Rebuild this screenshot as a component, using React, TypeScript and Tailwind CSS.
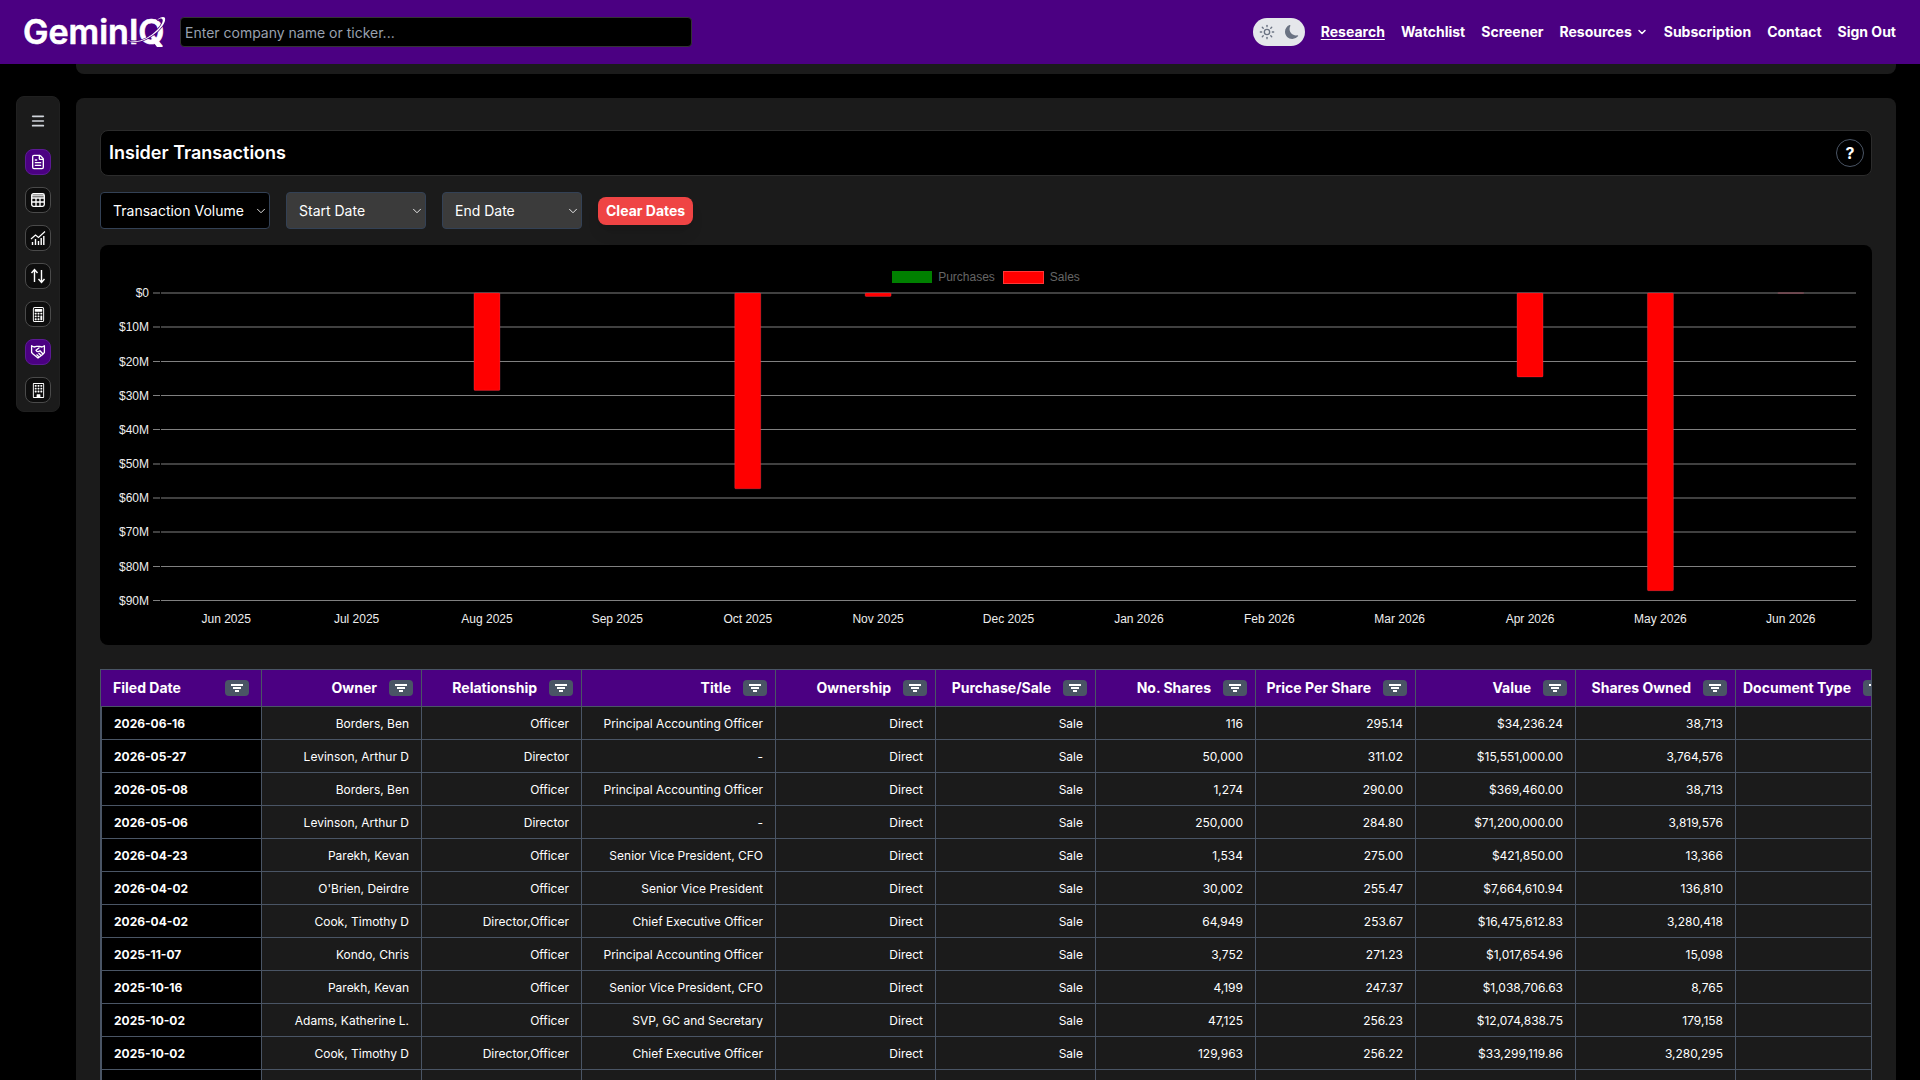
import React from "react"
import { ChevronDown, FileText, Menu, Sun } from "lucide-react"
import { BsBuilding, BsCalculator, BsMoonFill } from "react-icons/bs"

const navLinks = ["Watchlist", "Screener", "Resources", "Subscription", "Contact", "Sign Out"]

const months = [
  { label: "Jun 2025", sales: 0 },
  { label: "Jul 2025", sales: 0 },
  { label: "Aug 2025", sales: 28.5 },
  { label: "Sep 2025", sales: 0 },
  { label: "Oct 2025", sales: 57.3 },
  { label: "Nov 2025", sales: 1.02 },
  { label: "Dec 2025", sales: 0 },
  { label: "Jan 2026", sales: 0 },
  { label: "Feb 2026", sales: 0 },
  { label: "Mar 2026", sales: 0 },
  { label: "Apr 2026", sales: 24.56 },
  { label: "May 2026", sales: 87.12 },
  { label: "Jun 2026", sales: 0.03 },
]

const ticks = [
  { label: "$0", y: 0 },
  { label: "$10M", y: 34 },
  { label: "$20M", y: 68.5 },
  { label: "$30M", y: 102.5 },
  { label: "$40M", y: 136.5 },
  { label: "$50M", y: 171 },
  { label: "$60M", y: 205 },
  { label: "$70M", y: 239 },
  { label: "$80M", y: 273.5 },
  { label: "$90M", y: 307.5 },
]

const columns = [
  "Filed Date",
  "Owner",
  "Relationship",
  "Title",
  "Ownership",
  "Purchase/Sale",
  "No. Shares",
  "Price Per Share",
  "Value",
  "Shares Owned",
  "Document Type",
]

const rows = [
  ["2026-06-16", "Borders, Ben", "Officer", "Principal Accounting Officer", "Direct", "Sale", "116", "295.14", "$34,236.24", "38,713"],
  ["2026-05-27", "Levinson, Arthur D", "Director", "-", "Direct", "Sale", "50,000", "311.02", "$15,551,000.00", "3,764,576"],
  ["2026-05-08", "Borders, Ben", "Officer", "Principal Accounting Officer", "Direct", "Sale", "1,274", "290.00", "$369,460.00", "38,713"],
  ["2026-05-06", "Levinson, Arthur D", "Director", "-", "Direct", "Sale", "250,000", "284.80", "$71,200,000.00", "3,819,576"],
  ["2026-04-23", "Parekh, Kevan", "Officer", "Senior Vice President, CFO", "Direct", "Sale", "1,534", "275.00", "$421,850.00", "13,366"],
  ["2026-04-02", "O'Brien, Deirdre", "Officer", "Senior Vice President", "Direct", "Sale", "30,002", "255.47", "$7,664,610.94", "136,810"],
  ["2026-04-02", "Cook, Timothy D", "Director,Officer", "Chief Executive Officer", "Direct", "Sale", "64,949", "253.67", "$16,475,612.83", "3,280,418"],
  ["2025-11-07", "Kondo, Chris", "Officer", "Principal Accounting Officer", "Direct", "Sale", "3,752", "271.23", "$1,017,654.96", "15,098"],
  ["2025-10-16", "Parekh, Kevan", "Officer", "Senior Vice President, CFO", "Direct", "Sale", "4,199", "247.37", "$1,038,706.63", "8,765"],
  ["2025-10-02", "Adams, Katherine L.", "Officer", "SVP, GC and Secretary", "Direct", "Sale", "47,125", "256.23", "$12,074,838.75", "179,158"],
  ["2025-10-02", "Cook, Timothy D", "Director,Officer", "Chief Executive Officer", "Direct", "Sale", "129,963", "256.22", "$33,299,119.86", "3,280,295"],
  [],
]

const Logo = () => (
  <svg width="142" height="36" viewBox="0 0 142 36" role="img" className="shrink-0 overflow-visible" fill="white">
    <text x="-1" y="30" fontFamily="Inter, sans-serif" fontSize="34" fontWeight="600" stroke="white" strokeWidth="0.6">
      GeminIQ
    </text>
    <path
      d="M103 26c11 4 22-2 30-10 5-5 7-10 5-11-1-1-3 0-5 1 3-3 7-4 8-2 1 4-3 9-7 13-10 9-22 14-31 9z"
      stroke="#4b0082"
      strokeWidth="1.500"
      paintOrder="stroke"
    />
    <path d="M127 25l4-2 8 10h-6z" />
  </svg>
)

const TableIcon = () => (
  <svg width="16" height="16" viewBox="0 0 16 16" fill="none" stroke="currentColor">
    <rect x="1.700" y="1.700" width="12.600" height="12.600" rx="1.800" strokeWidth="1.300" />
    <path d="M2 3.500h12" strokeWidth="2.200" opacity="0.8" />
    <path d="M2 6h12M2 10h12M6 6v8M10 6v8" strokeWidth="1.300" />
  </svg>
)

const TrendIcon = () => (
  <svg width="16" height="16" viewBox="0 0 16 16" fill="none" stroke="currentColor">
    <path d="M1 9l4.500-4 3 2.500L15 1.500" strokeWidth="1.200" />
    <path d="M2.500 15v-3M5.500 15V9M8.500 15v-4M11.200 15V8M13.800 15V6" strokeWidth="1.400" />
  </svg>
)

const SwapIcon = () => (
  <svg width="16" height="16" viewBox="0 0 16 16" fill="none" stroke="currentColor" strokeWidth="1.400">
    <path d="M4.500 14V2M1.500 5l3-3.500 3 3.500M11.500 2v12M8.500 11l3 3.500 3-3.500" />
  </svg>
)

const HandshakeIcon = () => (
  <svg width="16" height="16" viewBox="0 0 16 16" fill="none" stroke="currentColor" strokeWidth="1.300" strokeLinejoin="round">
    <path d="M1.600 1.700L4 3l2.500-.7h3L12 3l2.400-1.300V8.500l-1.400 1.700L8 14 3 10 1.600 8.500z" />
    <path d="M9.500 3.500L6 6.200c.7 1.800 2.600 1.600 4 .6l3 3.200M8.500 9l2.500 2.500M6.500 10.500l2.300 2.300" />
  </svg>
)

const sidebarItems = [
  { label: "Filings", icon: <FileText size={16} />, active: true },
  { label: "Financials", icon: <TableIcon />, active: false },
  { label: "Charts", icon: <TrendIcon />, active: false },
  { label: "Compare", icon: <SwapIcon />, active: false },
  { label: "Valuation", icon: <BsCalculator size={15} />, active: false },
  { label: "Insiders", icon: <HandshakeIcon />, active: true },
  { label: "Institutions", icon: <BsBuilding size={15} />, active: false },
]

const Header = () => (
  <header className="flex h-16 shrink-0 items-center justify-between bg-[#4b0082] px-6">
    <div className="flex grow items-center gap-[14px]">
      <a href="#" aria-label="Home">
        <Logo />
      </a>
      <input
        type="text"
        aria-label="Company search"
        placeholder="Enter company name or ticker..."
        className="h-[30px] w-full max-w-[512px] rounded border border-[#333] bg-black px-1 text-sm text-white placeholder:text-gray-400"
      />
    </div>
    <nav className="flex items-center gap-4 text-sm font-bold">
      <button
        type="button"
        aria-label="Toggle theme"
        className="flex h-7 w-[52px] items-center justify-between rounded-full bg-gray-200 px-[6px] text-gray-500"
      >
        <Sun size={16} strokeWidth={2} />
        <BsMoonFill size={14} />
      </button>
      <a href="#" className="underline underline-offset-2">
        Research
      </a>
      {navLinks.map((link) => (
        <a key={link} href="#" className="flex items-center gap-1">
          {link}
          {link === "Resources" && <ChevronDown size={12} strokeWidth={3} />}
        </a>
      ))}
    </nav>
  </header>
)

const Sidebar = () => (
  <aside className="mt-8 flex w-11 shrink-0 flex-col items-center gap-3 self-start rounded-lg border border-[#202020] bg-[#1b1b1b] pt-[11px] pb-2">
    <button type="button" aria-label="Menu" className="mb-[3px] flex h-[26px] w-[26px] items-center justify-center text-gray-300">
      <Menu size={16} strokeWidth={2.5} />
    </button>
    {sidebarItems.map((item) => (
      <button
        key={item.label}
        type="button"
        aria-label={item.label}
        className={
          item.active
            ? "flex h-[26px] w-[26px] items-center justify-center rounded-lg border border-[#5c1a94] bg-[#4b0082]"
            : "flex h-[26px] w-[26px] items-center justify-center rounded-lg border border-[#4a4a4a] bg-[#0d0d0d]"
        }
      >
        {item.icon}
      </button>
    ))}
  </aside>
)

type PickerProps = {
  label: string
  className: string
}

const Picker: React.FC<PickerProps> = ({ label, className }) => (
  <div className="relative">
    <select
      aria-label={label}
      className={`h-[37px] appearance-none rounded border border-[#334155] pl-3 text-sm ${className}`}
    >
      <option>{label}</option>
    </select>
    <ChevronDown size={14} strokeWidth={1.5} className="pointer-events-none absolute top-3 right-[2px]" />
  </div>
)

const VolumeChart = () => (
  <div className="mt-4 h-[400px] rounded-lg bg-black p-4 font-['Liberation_Sans',sans-serif] text-xs">
    <div className="flex h-8 items-center justify-center gap-2 text-[#666]">
      <span className="flex items-center gap-[6px]">
        <span className="h-3 w-10 bg-[#008000]" />
        Purchases
      </span>
      <span className="flex items-center gap-[6px]">
        <span className="h-[13px] w-[41px] border border-[#ff3838] bg-[#ff0000]" />
        Sales
      </span>
    </div>
    <div className="pl-[45px]">
      <svg width="100%" height="336" className="block overflow-visible" fontSize="12">
        {ticks.map((tick) => (
          <g key={tick.label} stroke="#808080">
            <line x1="-8" x2="-1" y1={tick.y} y2={tick.y} />
            <line x1="0" x2="100%" y1={tick.y} y2={tick.y} />
            <text x="-12" y={tick.y + 4} textAnchor="end" fill="#eee" stroke="none">
              {tick.label}
            </text>
          </g>
        ))}
        {months.map((month, i) => {
          const center = `${((i + 0.5) * 100) / months.length}%`
          return (
            <React.Fragment key={month.label}>
              {month.sales > 0 && (
                <svg x={center} y="0" className="overflow-visible">
                  <rect
                    x="-13"
                    width="26"
                    height={month.sales * 3.417}
                    rx="1"
                    fill="#ff0000"
                    stroke="#ff6384"
                    strokeOpacity="0.25"
                  />
                </svg>
              )}
              <text x={center} y="330" textAnchor="middle" fill="#eee">
                {month.label}
              </text>
            </React.Fragment>
          )
        })}
      </svg>
    </div>
  </div>
)

const FilterButton: React.FC<{ column: string }> = ({ column }) => (
  <button
    type="button"
    aria-label={`Filter ${column}`}
    className="flex h-4 w-6 shrink-0 items-center justify-center rounded bg-gray-600"
  >
    <svg width="12" height="8" viewBox="0 0 12 8" fill="white">
      <path d="M0 0h12v2H0zM2 3h8v2H2zM4 6h4v2H4z" />
    </svg>
  </button>
)

const TransactionsTable = () => (
  <div className="mt-6 overflow-hidden border border-b-0 border-gray-600">
    <table className="w-[1794px] table-fixed border-separate border-spacing-0">
      <colgroup>
        {columns.map((column) => (
          <col key={column} className={column === "Title" ? "w-[194px]" : "w-[160px]"} />
        ))}
      </colgroup>
      <thead>
        <tr>
          {columns.map((column, i) => (
            <th
              key={column}
              className={
                i === 0
                  ? "h-[37px] border-b border-gray-600 bg-[#4b0082] px-3 text-sm font-bold"
                  : "h-[37px] border-b border-l border-gray-600 bg-[#4b0082] px-2 text-sm font-bold"
              }
            >
              <div className={i === 0 ? "flex items-center justify-between" : "flex items-center justify-end gap-3"}>
                <span className="whitespace-nowrap">{column}</span>
                <FilterButton column={column} />
              </div>
            </th>
          ))}
        </tr>
      </thead>
      <tbody>
        {rows.map((row, r) => (
          <tr key={r}>
            {columns.map((column, i) =>
              i === 0 ? (
                <td key={column} className="h-[33px] border-b border-l border-gray-600 bg-black px-3 pt-[2px] pb-0 text-xs font-bold">
                  {row[i]}
                </td>
              ) : (
                <td key={column} className="h-[33px] border-b border-l border-gray-600 px-3 pt-[2px] pb-0 text-right text-xs whitespace-nowrap">
                  {row[i]}
                </td>
              )
            )}
          </tr>
        ))}
      </tbody>
    </table>
  </div>
)

export default function App() {
  return (
    <div className="flex h-screen flex-col overflow-hidden bg-black font-['Inter',sans-serif] text-white">
      <Header />
      <div className="flex min-h-0 grow gap-4 pr-6 pl-4">
        <Sidebar />
        <main className="min-w-0 grow">
          <div className="h-[10px] rounded-b-lg bg-[#1b1b1b]" />
          <section className="mt-6 rounded-lg bg-[#1b1b1b] px-6 pt-8 pb-6">
            <div className="flex h-[46px] items-center justify-between rounded-lg border border-[#2c2c2c] bg-black pr-[7px] pl-2">
              <h1 className="text-lg font-semibold">Insider Transactions</h1>
              <button
                type="button"
                aria-label="Help"
                className="h-7 w-7 rounded-full border border-gray-600 text-base font-bold"
              >
                ?
              </button>
            </div>
            <div className="mt-4 flex items-center gap-4">
              <Picker label="Transaction Volume" className="w-[170px] bg-black" />
              <Picker label="Start Date" className="w-[140px] bg-[#3b3b3b]" />
              <Picker label="End Date" className="w-[140px] bg-[#3b3b3b]" />
              <button type="button" className="h-7 rounded-lg bg-[#ef4444] px-2 text-sm font-bold shadow-lg">
                Clear Dates
              </button>
            </div>
            <VolumeChart />
            <TransactionsTable />
          </section>
        </main>
      </div>
    </div>
  )
}
